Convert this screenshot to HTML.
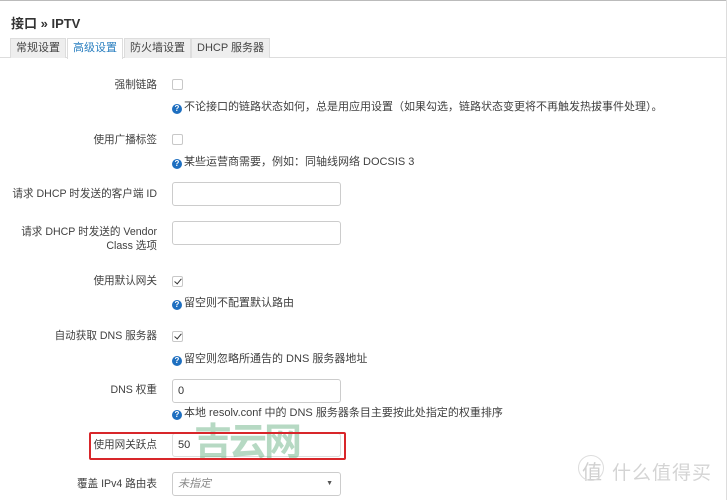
<!DOCTYPE html>
<html><head><meta charset="utf-8"><style>
*{margin:0;padding:0;box-sizing:border-box}
body{width:727px;height:500px;overflow:hidden;background:#fff;font-family:"Liberation Sans","Noto Sans CJK SC",sans-serif;font-size:11px;color:#404040;position:relative}
.a{position:absolute;white-space:nowrap}
.l{position:absolute;right:570px;text-align:right;white-space:nowrap;line-height:14px;font-size:10.6px}
.cb{position:absolute;left:172px;width:11px;height:11px;border:1px solid #c8c8c8;border-radius:2px;background:#fff}
.ck::after{content:"";position:absolute;left:3px;top:0px;width:3px;height:6px;border:solid #333;border-width:0 1.5px 1.5px 0;transform:rotate(40deg)}
.h{position:absolute;left:172px;white-space:nowrap;font-size:11px;line-height:14px}
.q{display:inline-block;width:10px;height:10px;border-radius:50%;background:#1e6fc0;color:#fff;font-size:8px;font-weight:bold;text-align:center;line-height:10px;vertical-align:-1px;margin-right:2px}
.in{position:absolute;left:172px;width:169px;height:24px;border:1px solid #ccc;border-radius:3px;background:#fff;padding-left:5px;line-height:22px;font-size:11px;color:#333}
.tab{position:absolute;top:38px;height:20px;border:1px solid #ddd;border-bottom:none;background:#eee;line-height:19px;padding:0 5px;font-size:11px;color:#444}
</style></head><body>
<div class="a" style="left:0;top:0;width:727px;height:1px;background:#bbb"></div>
<div class="a" style="left:726px;top:0;width:1px;height:500px;background:#ddd"></div>
<div class="a" style="left:11px;top:13px;font-size:13px;font-weight:bold;color:#333">接口 » IPTV</div>
<div class="a" style="left:0;top:57px;width:727px;height:1px;background:#ddd"></div>
<div class="tab" style="left:10px">常规设置</div>
<div class="tab" style="left:67px;background:#fff;color:#2a7fc0;height:21px">高级设置</div>
<div class="tab" style="left:124px">防火墙设置</div>
<div class="tab" style="left:191px">DHCP 服务器</div>

<div class="l" style="top:78px">强制链路</div>
<div class="cb" style="top:79px"></div>
<div class="h" style="top:100px"><span class="q">?</span>不论接口的链路状态如何，总是用应用设置（如果勾选，链路状态变更将不再触发热拔事件处理）。</div>

<div class="l" style="top:133px">使用广播标签</div>
<div class="cb" style="top:134px"></div>
<div class="h" style="top:155px"><span class="q">?</span>某些运营商需要，例如：同轴线网络 DOCSIS 3</div>

<div class="l" style="top:187px">请求 DHCP 时发送的客户端 ID</div>
<div class="in" style="top:182px"></div>

<div class="l" style="top:225px">请求 DHCP 时发送的 Vendor<br>Class 选项</div>
<div class="in" style="top:221px"></div>

<div class="l" style="top:274px">使用默认网关</div>
<div class="cb ck" style="top:276px"></div>
<div class="h" style="top:296px"><span class="q">?</span>留空则不配置默认路由</div>

<div class="l" style="top:329px">自动获取 DNS 服务器</div>
<div class="cb ck" style="top:331px"></div>
<div class="h" style="top:352px"><span class="q">?</span>留空则忽略所通告的 DNS 服务器地址</div>

<div class="l" style="top:383px">DNS 权重</div>
<div class="in" style="top:379px">0</div>
<div class="h" style="top:406px"><span class="q">?</span>本地 resolv.conf 中的 DNS 服务器条目主要按此处指定的权重排序</div>

<div class="l" style="top:438px">使用网关跃点</div>
<div class="in" style="top:433px;border-color:#ddd">50</div>
<div class="a" style="left:194px;top:411px;font-size:38px;font-weight:bold;color:rgba(110,180,135,0.5);letter-spacing:-3px">吉云网</div>
<div class="a" style="left:89px;top:432px;width:257px;height:28px;border:2px solid #d8262a;border-radius:2px"></div>

<div class="l" style="top:477px">覆盖 IPv4 路由表</div>
<div class="in" style="top:472px;font-style:italic;color:#888">未指定<span style="position:absolute;right:7px;top:0;font-style:normal;font-size:7px;color:#555">▼</span></div>

<div class="a" style="left:582px;top:456px;font-size:20px;color:#d0d0d0">值</div>
<div class="a" style="left:578px;top:455px;width:26px;height:26px;border:1px solid #ddd;border-radius:50%"></div>
<div class="a" style="left:612px;top:458px;font-size:19px;color:#d4d4d4;letter-spacing:1px">什么值得买</div>
</body></html>
